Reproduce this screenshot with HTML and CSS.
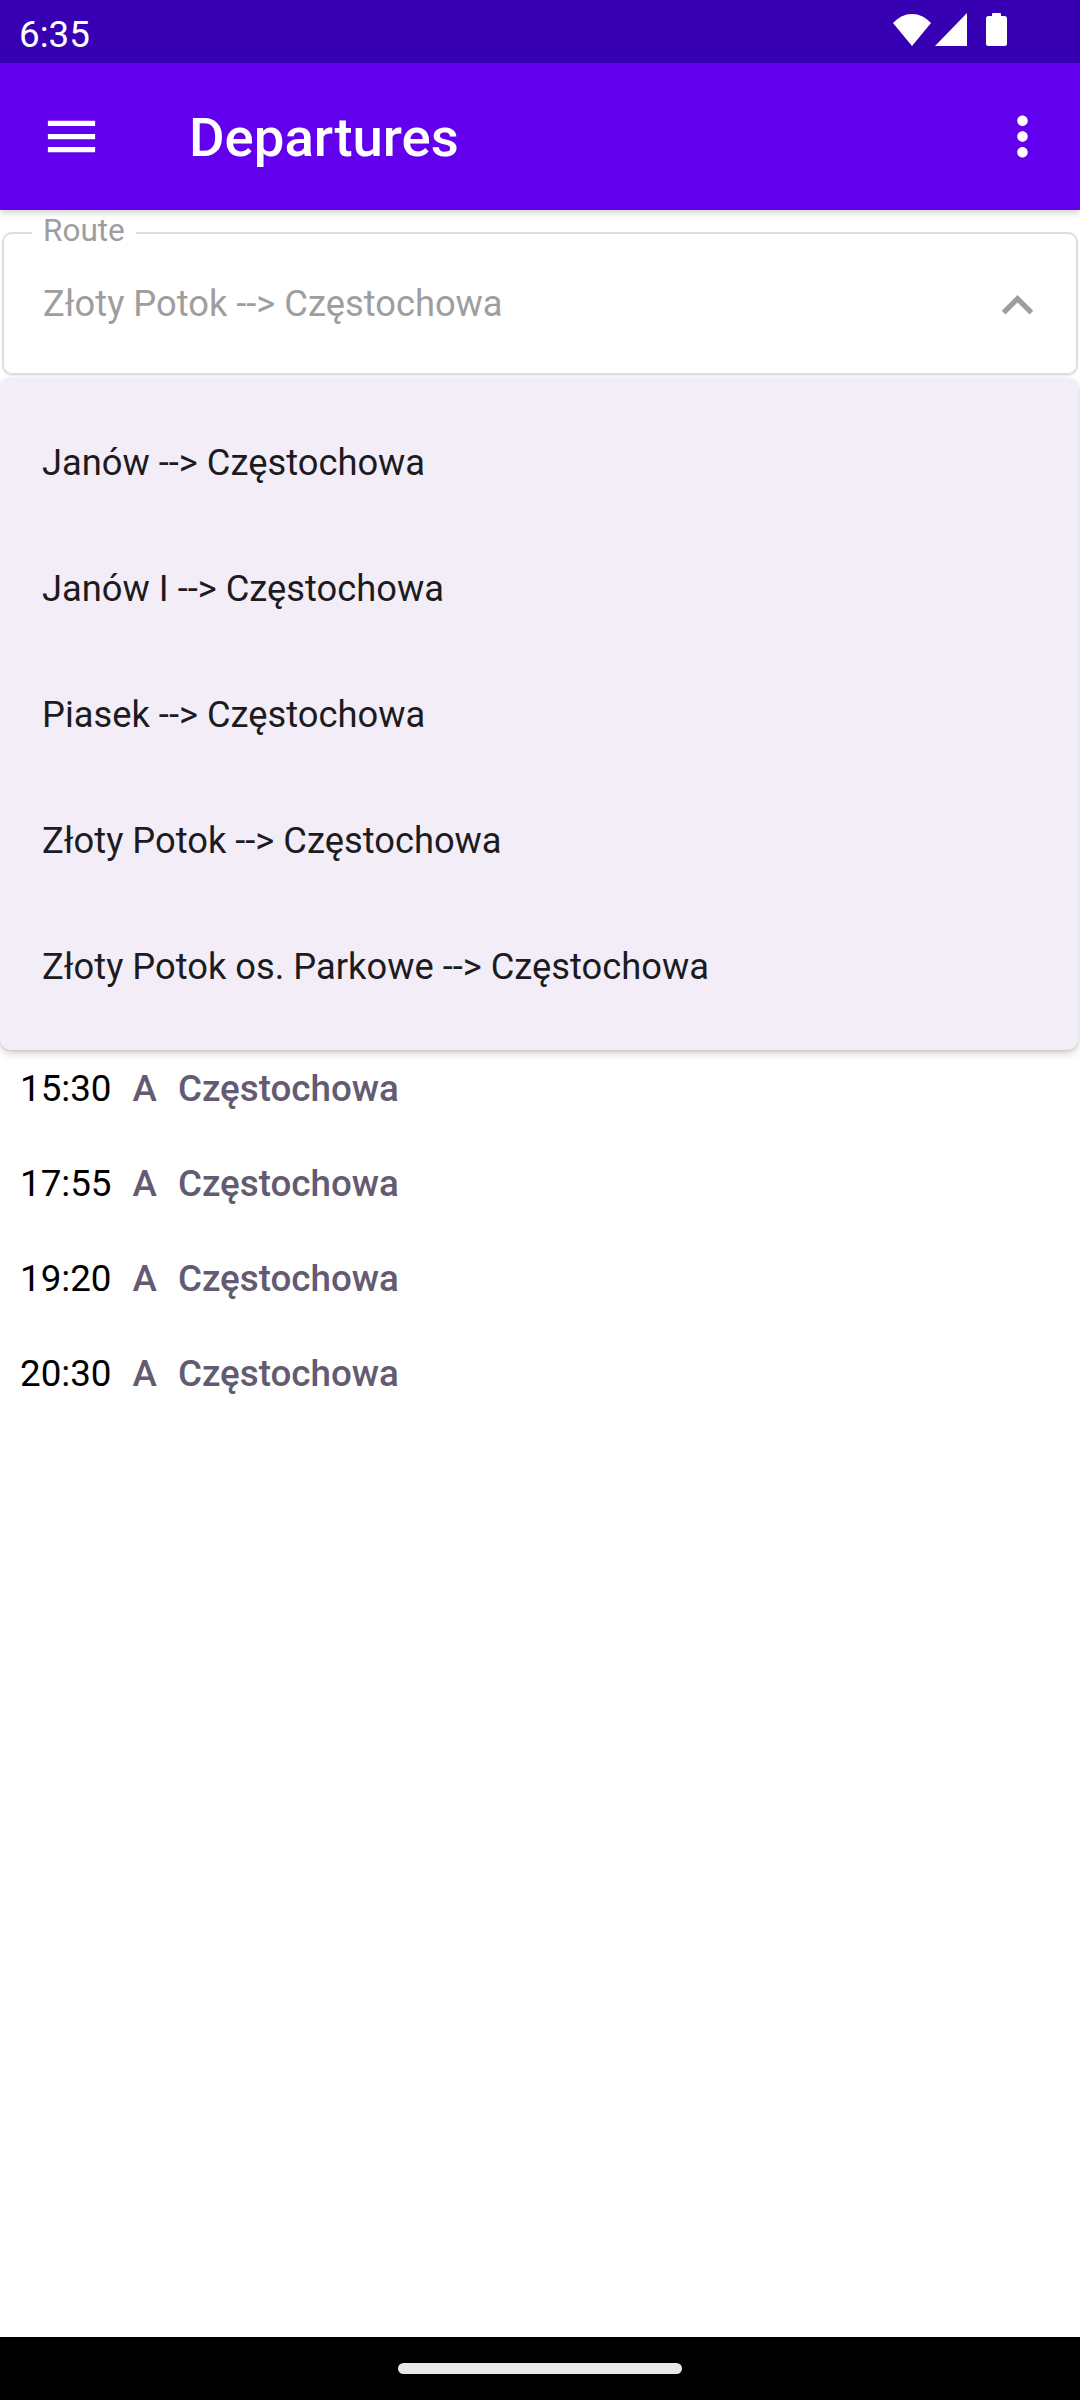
FILE: index.html
```html
<!DOCTYPE html>
<html lang="pl">
<head>
<meta charset="utf-8">
<title>Departures</title>
<link rel="stylesheet" href="styles.css">
</head>
<body>
<div class="screen">
  <div class="status">
    <span class="clock">6:35</span>
    <div class="status-icons">
      <svg class="wifi" width="40" height="34" viewBox="0 0 40 34"><path d="M20 33 L1 10 A24.6 24.6 0 0 1 39 10 Z" fill="#fff"/></svg>
      <svg class="signal" width="33" height="34" viewBox="0 0 33 34"><path d="M0 33 L32 33 L32 0 Z" fill="#fff"/></svg>
      <svg class="battery" width="21" height="34" viewBox="0 0 21 34"><rect x="6" y="0" width="9" height="5" rx="1" fill="#fff"/><rect x="0" y="3" width="21" height="30" rx="2.5" fill="#fff"/></svg>
    </div>
  </div>
  <header class="appbar">
    <svg class="icon" width="63" height="63" viewBox="0 0 24 24"><path d="M3 18h18v-2H3v2zm0-5h18v-2H3v2zm0-7v2h18V6H3z" fill="#fff"/></svg>
    <h1 class="title">Departures</h1>
    <svg class="icon more" width="63" height="63" viewBox="0 0 24 24"><path d="M12 8c1.1 0 2-.9 2-2s-.9-2-2-2-2 .9-2 2 .9 2 2 2zm0 2c-1.1 0-2 .9-2 2s.9 2 2 2 2-.9 2-2-.9-2-2-2zm0 6c-1.1 0-2 .9-2 2s.9 2 2 2 2-.9 2-2-.9-2-2-2z" fill="#fff"/></svg>
  </header>
  <main class="content">
    <div class="field">
      <span class="field-label">Route</span>
      <span class="field-value">Złoty Potok --&gt; Częstochowa</span>
      <svg class="chevron" width="63" height="63" viewBox="0 0 24 24"><path d="M12 8l-6 6 1.41 1.41L12 10.83l4.59 4.58L18 14z" fill="#9e9e9e"/></svg>
    </div>
    <ul class="departures">
      <li class="dep"><span class="time">15:30</span><span class="line">A</span><span class="dest">Częstochowa</span></li>
      <li class="dep"><span class="time">17:55</span><span class="line">A</span><span class="dest">Częstochowa</span></li>
      <li class="dep"><span class="time">19:20</span><span class="line">A</span><span class="dest">Częstochowa</span></li>
      <li class="dep"><span class="time">20:30</span><span class="line">A</span><span class="dest">Częstochowa</span></li>
    </ul>
    <ul class="menu">
      <li class="menu-item">Janów --&gt; Częstochowa</li>
      <li class="menu-item">Janów I --&gt; Częstochowa</li>
      <li class="menu-item">Piasek --&gt; Częstochowa</li>
      <li class="menu-item">Złoty Potok --&gt; Częstochowa</li>
      <li class="menu-item">Złoty Potok os. Parkowe --&gt; Częstochowa</li>
    </ul>
  </main>
  <div class="navbar"><span class="pill"></span></div>
</div>
</body>
</html>
```
FILE: styles.css
```css
* { box-sizing: border-box; }
html, body { margin: 0; padding: 0; }
body {
  font-family: Roboto, "Noto Sans", sans-serif;
  background: #fff;
}
.screen {
  width: 1080px;
  height: 2400px;
  display: flex;
  flex-direction: column;
  overflow: hidden;
}
.status {
  height: 63px;
  flex: none;
  background: #3700b3;
  display: flex;
  align-items: flex-start;
  justify-content: space-between;
  padding: 0 73px 0 19px;
  color: #fff;
}
.clock {
  font-size: 36.75px;
  line-height: 63px;
  padding-top: 3px;
}
.status-icons {
  display: flex;
  align-items: flex-start;
  padding-top: 13px;
}
.wifi { margin-right: 3px; }
.signal { margin-right: 18px; }
.appbar {
  height: 147px;
  flex: none;
  background: #6200ee;
  display: flex;
  align-items: center;
  padding: 0 26px 0 40px;
  box-shadow: 0 3px 6px rgba(0,0,0,0.18);
  position: relative;
  z-index: 2;
}
.icon { flex: none; }
.title {
  margin: 0 0 0 86px;
  flex: 1;
  font-size: 54.5px;
  font-weight: 500;
  color: #fff;
  line-height: 1;
  padding-top: 2px;
}
.content {
  flex: 1;
  position: relative;
}
.field {
  margin: 22px 2px 0 2px;
  height: 143px;
  border: 2px solid #dedede;
  border-radius: 10px;
  position: relative;
  display: flex;
  align-items: center;
  padding: 0 27px 0 39px;
  box-shadow: 0 1px 2px rgba(0,0,0,0.08);
}
.field-label {
  position: absolute;
  left: 28px;
  top: -19.5px;
  padding: 0 11px;
  background: #fff;
  font-size: 31.5px;
  line-height: 31.5px;
  color: #9e9e9e;
}
.field-value {
  flex: 1;
  font-size: 36.3px;
  color: #9e9e9e;
}
.chevron { flex: none; margin-top: 3px; }
.departures {
  list-style: none;
  margin: 666px 0 0 0;
  padding: 0 0 0 20px;
}
.dep {
  height: 95px;
  display: flex;
  align-items: center;
  gap: 21px;
  font-size: 36.75px;
  line-height: 95px;
}
.time { color: #000; }
.line, .dest { color: #625b71; font-weight: 500; }
.menu {
  position: absolute;
  top: 168px;
  left: 0;
  right: 2px;
  margin: 0;
  padding: 21px 0;
  list-style: none;
  background: #f3edf7;
  border-radius: 11px;
  box-shadow: 0 4px 8px rgba(0,0,0,0.16), 0 1px 3px rgba(0,0,0,0.12);
  z-index: 3;
}
.menu-item {
  height: 126px;
  display: flex;
  align-items: center;
  padding: 0 42px;
  font-size: 36.3px;
  color: #1c1b1f;
}
.navbar {
  height: 63px;
  flex: none;
  background: #000;
  display: flex;
  justify-content: center;
  padding-top: 26px;
}
.pill {
  width: 284px;
  height: 11px;
  border-radius: 6px;
  background: #e8e8e8;
}
```
